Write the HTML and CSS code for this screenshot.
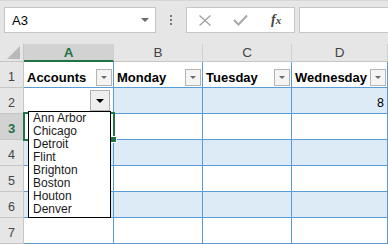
FILE: index.html
```html
<!DOCTYPE html>
<html lang="en">
<head>
  <meta charset="UTF-8" />
  <title>Accounts sheet</title>
  <link rel="stylesheet" href="styles.css">
</head>
<body>

  <div class="topbar">
    <div class="namebox">
      <span>A3</span>
      <svg class="nb-arrow" width="8" height="4" viewBox="0 0 8 4"><polygon points="0,0 8,0 4,4" fill="#6a6a6a"/></svg>
    </div>
    <div class="grip"><i></i><i></i><i></i></div>
    <div class="fxbox">
      <svg class="fx-cancel" width="12" height="11" viewBox="0 0 12 11"><path d="M0.5 0.5 L11.5 10.5 M11.5 0.5 L0.5 10.5" stroke="#a0a0a0" stroke-width="1.3" fill="none"/></svg>
      <svg class="fx-enter" width="15" height="12" viewBox="0 0 15 12"><path d="M1 6 L5.5 10.5 L14 1.5" stroke="#a8a8a8" stroke-width="2" fill="none"/></svg>
      <span class="fx-label">f<span class="fx-x">x</span></span>
    </div>
    <div class="formula"></div>
  </div>

  <div class="sheet">
    <div class="grid">
      <!-- column headers -->
      <div class="corner">
        <svg width="13" height="13" viewBox="0 0 13 13"><polygon points="13,0 13,13 0,13" fill="#b9b9b9"/></svg>
      </div>
      <div class="col-head active">A</div>
      <div class="col-head">B</div>
      <div class="col-head">C</div>
      <div class="col-head">D</div>

      <!-- row 1: table header -->
      <div class="row-head">1</div>
      <div class="cell th"><span>Accounts</span><span class="filter"></span></div>
      <div class="cell th"><span>Monday</span><span class="filter"></span></div>
      <div class="cell th"><span>Tuesday</span><span class="filter"></span></div>
      <div class="cell th"><span>Wednesday</span><span class="filter"></span></div>

      <!-- row 2 -->
      <div class="row-head">2</div>
      <div class="cell band picker"><span class="picker-btn"></span></div>
      <div class="cell band"></div>
      <div class="cell band"></div>
      <div class="cell band num">8</div>

      <!-- row 3 -->
      <div class="row-head active">3</div>
      <div class="cell"></div>
      <div class="cell"></div>
      <div class="cell"></div>
      <div class="cell"></div>

      <!-- row 4 -->
      <div class="row-head">4</div>
      <div class="cell band"></div>
      <div class="cell band"></div>
      <div class="cell band"></div>
      <div class="cell band"></div>

      <!-- row 5 -->
      <div class="row-head">5</div>
      <div class="cell"></div>
      <div class="cell"></div>
      <div class="cell"></div>
      <div class="cell"></div>

      <!-- row 6 -->
      <div class="row-head">6</div>
      <div class="cell band"></div>
      <div class="cell band"></div>
      <div class="cell band"></div>
      <div class="cell band"></div>

      <!-- row 7 -->
      <div class="row-head">7</div>
      <div class="cell"></div>
      <div class="cell"></div>
      <div class="cell"></div>
      <div class="cell"></div>
    </div>

    <div class="selection"><span class="handle"></span></div>

    <ul class="dropdown">
      <li>Ann Arbor</li>
      <li>Chicago</li>
      <li>Detroit</li>
      <li>Flint</li>
      <li>Brighton</li>
      <li>Boston</li>
      <li>Houton</li>
      <li>Denver</li>
    </ul>
  </div>

</body>
</html>
```

FILE: styles.css
```css
body {
  margin: 0;
  width: 388px;
  height: 244px;
  overflow: hidden;
  background: #e6e6e6;
  font-family: "Liberation Sans", Arial, sans-serif;
  color: #000;
}

/* formula bar */
.topbar {
  height: 44px;
  box-sizing: border-box;
  border-top: 1px solid #d6d6d6;
  padding: 6px 0 0 4px;
  display: flex;
  align-items: flex-start;
}

.namebox {
  width: 152px;
  height: 26px;
  box-sizing: border-box;
  background: #fff;
  border: 1px solid #c6c6c6;
  display: flex;
  align-items: center;
  justify-content: space-between;
  padding: 0 6px 0 7px;
  font-size: 13px;
}

.nb-arrow {
  display: block;
}

.grip {
  width: 30px;
  height: 26px;
  display: flex;
  flex-direction: column;
  align-items: center;
  justify-content: center;
  gap: 2px;
}

.grip i {
  width: 2px;
  height: 2px;
  background: #777;
}

.fxbox {
  width: 109px;
  height: 26px;
  box-sizing: border-box;
  background: #fff;
  border: 1px solid #c6c6c6;
  display: flex;
  align-items: center;
  padding-left: 12px;
}

.fx-cancel {
  display: block;
}

.fx-enter {
  display: block;
  margin-left: 22px;
}

.fx-label {
  margin-left: 23px;
  font-family: "Liberation Serif", "Times New Roman", serif;
  font-style: italic;
  font-weight: bold;
  font-size: 14px;
  color: #444;
}

.fx-x {
  font-size: 11px;
}

.formula {
  flex: 1;
  height: 26px;
  box-sizing: border-box;
  margin-left: 4px;
  background: #fff;
  border: 1px solid #c6c6c6;
  border-right: none;
}

/* sheet grid */
.sheet {
  position: relative;
}

.grid {
  display: grid;
  grid-template-columns: 24px 90px 89px 89px 96px;
  grid-template-rows: 18px repeat(7, 26px);
}

.grid > div {
  box-sizing: border-box;
}

.corner {
  border-right: 1px solid #c6c6c6;
  border-bottom: 1px solid #c6c6c6;
  display: flex;
  align-items: flex-end;
  justify-content: flex-end;
  padding: 0 3px 2px 0;
}

.corner svg {
  display: block;
}

.col-head {
  background: #e6e6e6;
  border-right: 1px solid #d0d0d0;
  border-bottom: 1px solid #c6c6c6;
  display: flex;
  align-items: center;
  justify-content: center;
  font-size: 13.5px;
  color: #444;
}

.col-head.active {
  background: #d2d2d2;
  color: #217346;
  font-weight: bold;
  border-bottom: 2px solid #217346;
}

.row-head {
  background: #e6e6e6;
  border-right: 1px solid #c6c6c6;
  border-bottom: 1px solid #c6c6c6;
  display: flex;
  align-items: flex-end;
  justify-content: center;
  padding-bottom: 3px;
  font-size: 12.5px;
  color: #444;
}

.row-head.active {
  background: #d2d2d2;
  color: #217346;
  font-weight: bold;
  font-size: 13px;
}

.cell {
  background: #fff;
  border-right: 1px solid #5b9bd5;
  border-bottom: 1px solid #5b9bd5;
  font-size: 12px;
}

.cell.band {
  background: #ddebf7;
}

.cell.th {
  display: flex;
  align-items: flex-end;
  justify-content: space-between;
  padding: 0 1px 1px 3px;
  font-size: 13px;
  font-weight: bold;
}

.cell.th span:first-child {
  padding-bottom: 1px;
}

.filter {
  width: 16px;
  height: 17px;
  box-sizing: border-box;
  border: 1px solid #b4b4b4;
  background: #f4f4f4;
  display: flex;
  align-items: center;
  justify-content: center;
}

.filter::after {
  content: "";
  border-left: 3px solid transparent;
  border-right: 3px solid transparent;
  border-top: 3px solid #6a6a6a;
}

.cell.num {
  display: flex;
  align-items: flex-end;
  justify-content: flex-end;
  padding: 0 3px 3px 0;
  font-size: 12.5px;
}

.cell.picker {
  background: #fff;
  display: flex;
  align-items: center;
  justify-content: flex-end;
  padding-right: 3px;
}

.picker-btn {
  width: 20px;
  height: 21px;
  box-sizing: border-box;
  border: 1px solid #b0b0b0;
  background: #eeeeee;
  display: flex;
  align-items: center;
  justify-content: center;
}

.picker-btn::after {
  content: "";
  border-left: 4px solid transparent;
  border-right: 4px solid transparent;
  border-top: 4px solid #000;
}

/* active cell A3 */
.selection {
  position: absolute;
  left: 23px;
  top: 68px;
  width: 92px;
  height: 29px;
  box-sizing: border-box;
  border: 2px solid #217346;
}

.handle {
  position: absolute;
  right: -4px;
  bottom: -4px;
  width: 5px;
  height: 5px;
  background: #217346;
  border: 1px solid #fff;
}

/* validation list */
.dropdown {
  position: absolute;
  left: 28px;
  top: 67px;
  width: 83px;
  height: 107px;
  box-sizing: border-box;
  margin: 0;
  padding: 0 0 0 4px;
  list-style: none;
  background: #fff;
  border: 1px solid #000;
  font-size: 12px;
  line-height: 13px;
  color: #1a1a1a;
}
```
